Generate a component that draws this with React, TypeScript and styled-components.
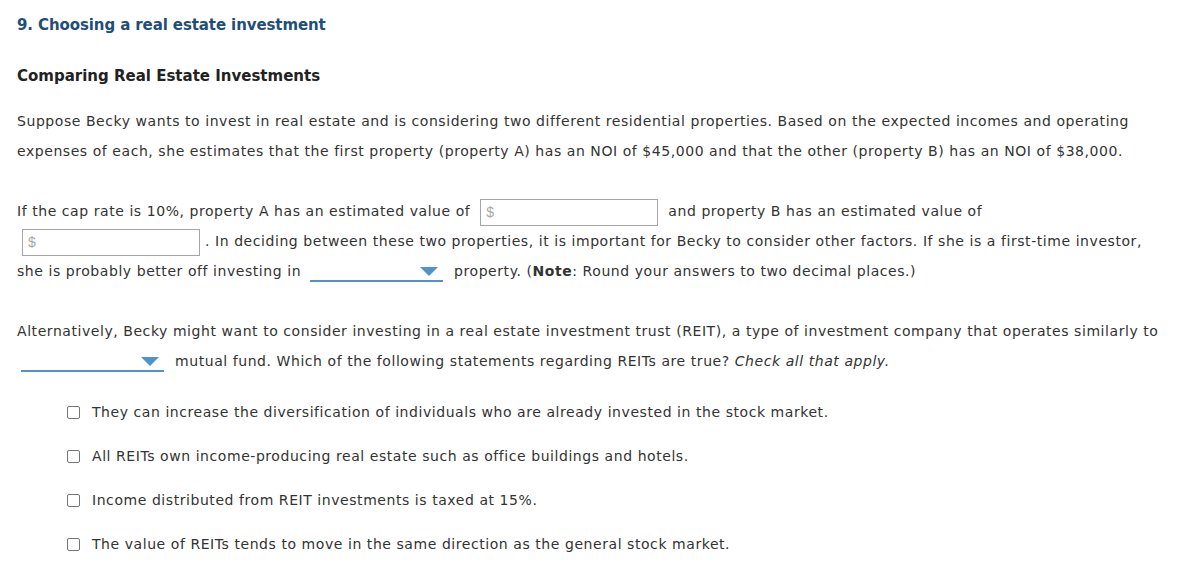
import React from "react";
import styled, { createGlobalStyle } from "styled-components";

const GlobalStyle = createGlobalStyle`
	body {
		margin: 0;
		background: #ffffff;
		font-family: "DejaVu Sans", Verdana, sans-serif;
		color: #333333;
	}
`;

const Page = styled.div`
	padding: 0 17px;
	width: 1145px;
	font-size: 14px;
	letter-spacing: 0.56px;
`;

const Title = styled.h1`
	margin: 15px 0 0;
	font-size: 15px;
	line-height: 20px;
	font-weight: bold;
	letter-spacing: -0.1px;
	color: #1f4e79;
`;

const SubTitle = styled.h2`
	margin: 31px 0 0;
	font-size: 15px;
	line-height: 20px;
	font-weight: bold;
	letter-spacing: 0;
	color: #222222;
`;

const Paragraph = styled.p<{ $gap: number }>`
	margin: ${(p) => p.$gap}px 0 0;
	line-height: 30px;
`;

const MoneyInput = styled.span`
	display: inline-flex;
	align-items: center;
	box-sizing: border-box;
	width: 178px;
	height: 27px;
	margin: 0 5px;
	padding-left: 5px;
	border: 1px solid #a6a6a6;
	vertical-align: middle;
	font-family: "Liberation Sans", Arial, sans-serif;
	font-size: 14px;
	letter-spacing: 0;
	color: #a8a8a8;
`;

const Select = styled.span<{ $width: number }>`
	display: inline-flex;
	align-items: center;
	justify-content: flex-end;
	box-sizing: border-box;
	width: ${(p) => p.$width}px;
	height: 20px;
	margin: 0 6px 0 4px;
	padding-right: 5px;
	border-bottom: 2px solid #5192ca;
	vertical-align: middle;
`;

const Options = styled.ul`
	list-style: none;
	margin: 14px 0 0;
	padding: 0 0 0 50px;
`;

const Option = styled.li`
	display: flex;
	align-items: center;
	height: 44px;
	line-height: 20px;
`;

const Box = styled.input`
	appearance: none;
	box-sizing: border-box;
	width: 13px;
	height: 13px;
	margin: 0 12px 0 0;
	border: 1px solid #767676;
	border-radius: 2px;
	background: #ffffff;
	flex-shrink: 0;
`;

function Arrow() {
	return (
		<svg width="18" height="9" viewBox="0 0 18 9">
			<polygon points="0,0 18,0 9,9" fill="#5192ca" />
		</svg>
	);
}

const statements = [
	"They can increase the diversification of individuals who are already invested in the stock market.",
	"All REITs own income-producing real estate such as office buildings and hotels.",
	"Income distributed from REIT investments is taxed at 15%.",
	"The value of REITs tends to move in the same direction as the general stock market.",
];

export default function App() {
	return (
		<>
			<GlobalStyle />
			<Page>
				<Title>9. Choosing a real estate investment</Title>
				<SubTitle>Comparing Real Estate Investments</SubTitle>
				<Paragraph $gap={20}>
					Suppose Becky wants to invest in real estate and is considering two different residential
					properties. Based on the expected incomes and operating expenses of each, she estimates that
					the first property (property A) has an NOI of $45,000 and that the other (property B) has an
					NOI of $38,000.
				</Paragraph>
				<Paragraph $gap={30}>
					If the cap rate is 10%, property A has an estimated value of{" "}
					<MoneyInput>$</MoneyInput> and property B has an estimated value of{" "}
					<MoneyInput>$</MoneyInput>. In deciding between these two properties, it is important for
					Becky to consider other factors. If she is a first-time investor, she is probably better off
					investing in{" "}
					<Select $width={133}>
						<Arrow />
					</Select>{" "}
					property. (<b>Note</b>: Round your answers to two decimal places.)
				</Paragraph>
				<Paragraph $gap={30}>
					Alternatively, Becky might want to consider investing in a real estate investment trust
					(REIT), a type of investment company that operates similarly to{" "}
					<Select $width={143}>
						<Arrow />
					</Select>{" "}
					mutual fund. Which of the following statements regarding REITs are true?{" "}
					<i>Check all that apply.</i>
				</Paragraph>
				<Options>
					{statements.map((s) => (
						<Option key={s}>
							<Box type="checkbox" />
							{s}
						</Option>
					))}
				</Options>
			</Page>
		</>
	);
}
